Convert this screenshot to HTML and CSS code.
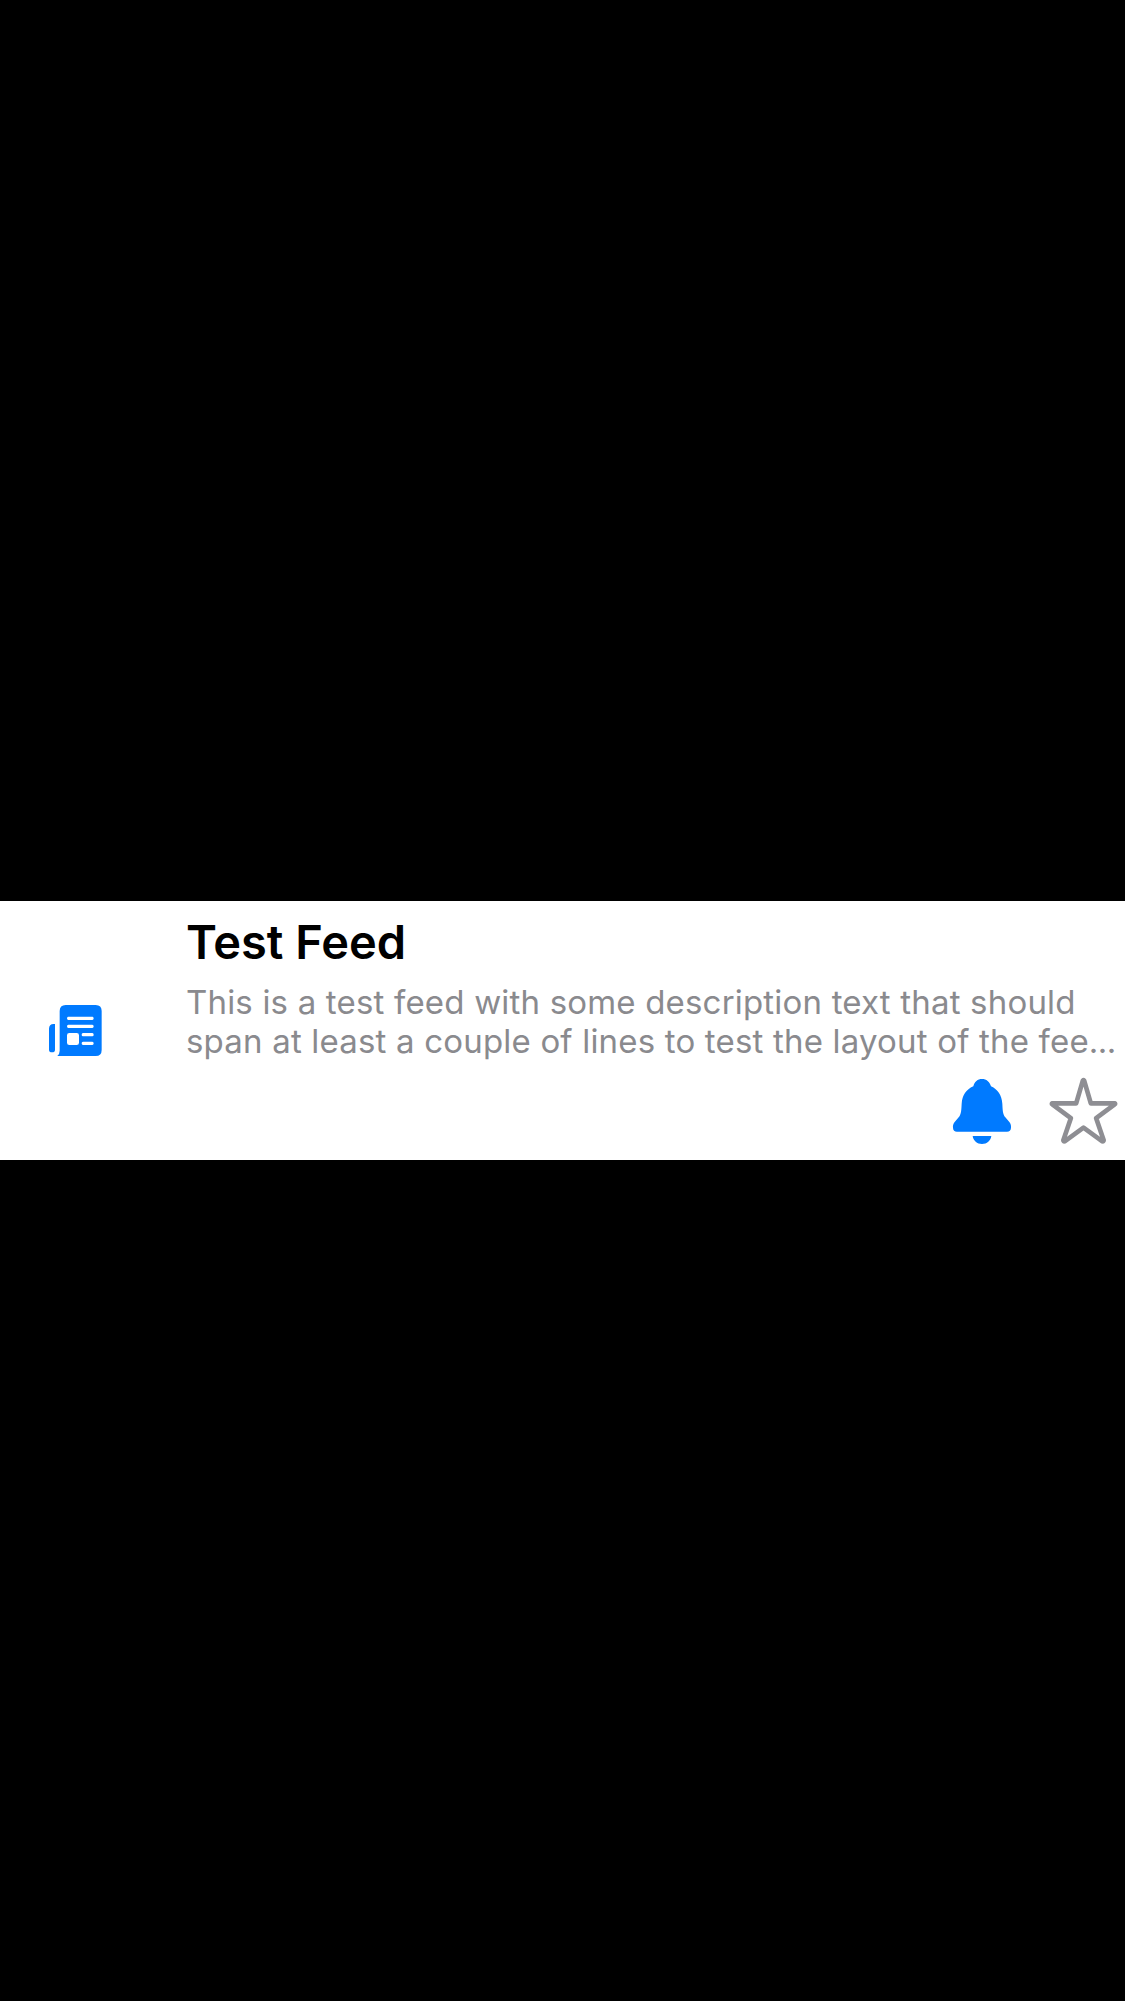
FILE: index.html
```html
<!DOCTYPE html>
<html lang="en">
<head>
<meta charset="utf-8">
<title>Test Feed</title>
<link rel="stylesheet" href="styles.css">
</head>
<body>
<article class="feed">
  <div class="feed-icon">
    <svg class="news" viewBox="54 42 165 159" aria-hidden="true">
      <path fill="#007aff" fill-rule="evenodd" d="M107 45H197Q215 45 215 63V180Q215 198 197 198H82Q89 192 89 182V63Q89 45 107 45ZM115 80Q111 80 111 85T115 90H187Q191 90 191 85T187 80ZM115 104Q111 104 111 109T115 114H187Q191 114 191 109T187 104ZM118 129Q111 129 111 136V158Q111 165 118 165H140Q147 165 147 158V136Q147 129 140 129ZM159 129Q155 129 155 134T159 139H187Q191 139 191 134T187 129ZM159 155Q155 155 155 160T159 165H187Q191 165 191 160T187 155ZM75 102V179Q75 187 66 187T57 179V117Q57 102 71 102Z"/>
    </svg>
  </div>
  <div class="feed-body">
    <h1 class="title">Test Feed</h1>
    <p class="description"><span class="line">This is a test feed with some description text that should</span><span class="line">span at least a couple of lines to test the layout of the fee<span class="dots">...</span></span></p>
    <div class="actions">
      <svg class="bell" viewBox="66 54 180 201" aria-label="Notifications">
        <path fill="#007aff" d="M156 57C169 57 179 65 183 79C204 89 215 106 217 131C218 149 218 163 226 172L238 186C242 191 244 197 243 203C243 211 238 215 231 215H81C74 215 69 211 69 203C68 197 70 191 74 186L86 172C94 163 94 149 95 131C97 106 108 89 130 79C133 65 143 57 156 57ZM128 228H184C182 242 171 252 156 252S130 242 128 228Z"/>
      </svg>
      <svg class="star" viewBox="354 51 213 201" aria-label="Favorite">
        <path fill="none" stroke="#8e8e93" stroke-width="14" stroke-linejoin="round" d="M458.500 62Q460.500 60 462.500 62L482.500 130H554Q557 131 554 133L498.500 174.500L521 241Q521 245 517 244L460.500 203L404 244Q400 245 400 241L422.500 174.500L367 133Q364 131 367 130H438.500Z"/>
      </svg>
    </div>
  </div>
</article>
</body>
</html>
```
FILE: styles.css
```css
body {
  margin: 0;
  height: 2001px;
  padding-top: 901px;
  box-sizing: border-box;
  background: #000;
  overflow: hidden;
  font-family: Inter, "Liberation Sans", sans-serif;
}
.feed {
  display: flex;
  height: 259px;
  background: #fff;
}
.feed-icon {
  display: flex;
  align-items: center;
  box-sizing: border-box;
  width: 186px;
  padding: 0 0 0 48px;
}
.news { width: 55px; height: 53px; margin-top: 0.6px; }
.feed-body { flex: 1; min-width: 0; padding-top: 12px; }
.title {
  margin: 0;
  color: #000;
  font-size: 47px;
  line-height: 58px;
  font-weight: 600;
  letter-spacing: -0.05px;
}
.description {
  margin: 12px 0 0;
  color: #8a8a8e;
  font-size: 33px;
  line-height: 39px;
}
.line {
  display: block;
  white-space: nowrap;
  letter-spacing: 0.185px;
}
.dots { letter-spacing: -0.6px; }
.actions {
  display: flex;
  justify-content: flex-end;
  padding: 16px 6px 0 0;
  gap: 36px;
}
.bell { width: 60px; height: 67px; margin-top: 1px; }
.star { width: 71px; height: 67px; }
```
